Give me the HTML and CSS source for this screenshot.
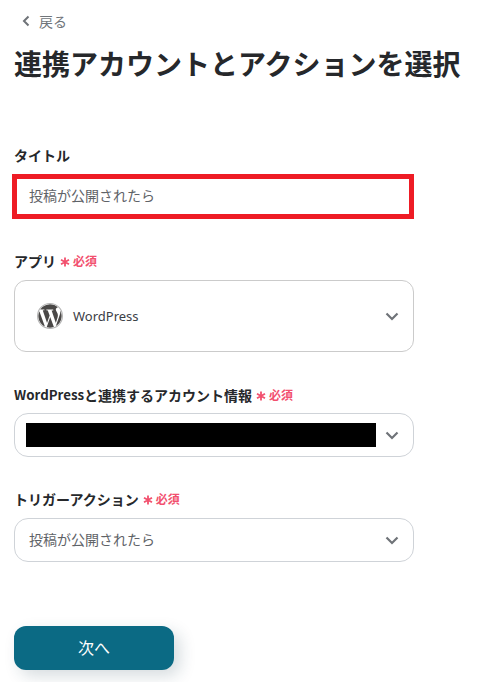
FILE: index.html
```html
<!DOCTYPE html>
<html lang="ja">
<head>
<meta charset="utf-8">
<title>連携アカウントとアクションを選択</title>
<link rel="stylesheet" href="styles.css">
</head>
<body>
<main class="page">
  <a class="back">
    <svg class="back-icon" width="10" height="12" viewBox="0 0 10 12"><path d="M7.5 1.5 3 6l4.5 4.5" fill="none" stroke="#6f7378" stroke-width="2"/></svg>
    <span>戻る</span>
  </a>
  <h1 class="title">連携アカウントとアクションを選択</h1>

  <section class="field field-title">
    <div class="label">タイトル</div>
    <div class="title-input">投稿が公開されたら</div>
  </section>

  <section class="field field-app">
    <div class="label">アプリ<span class="req"><svg class="star" width="10" height="10" viewBox="0 0 10 10"><path d="M5 .5v9M1 2.700l8 4.600M9 2.700l-8 4.600" stroke="#f2506e" stroke-width="1.800" fill="none"/></svg>必須</span></div>
    <div class="select select-app">
      <svg class="wp-logo" width="26" height="26" viewBox="0 0 24 24">
        <circle cx="12" cy="12" r="12" fill="#fff"/>
        <path fill="#4a4847" d="M21.469 6.825c.84 1.537 1.318 3.3 1.318 5.175 0 3.979-2.156 7.456-5.363 9.325l3.295-9.527c.615-1.54.82-2.771.82-3.864 0-.405-.026-.78-.07-1.11m-7.981.105c.647-.03 1.232-.105 1.232-.105.582-.075.514-.93-.067-.899 0 0-1.755.135-2.88.135-1.064 0-2.85-.15-2.85-.15-.585-.03-.661.855-.075.885 0 0 .54.061 1.125.09l1.68 4.605-2.37 7.08L5.354 6.9c.649-.03 1.234-.1 1.234-.1.585-.075.516-.93-.065-.896 0 0-1.746.138-2.874.138-.2 0-.438-.008-.69-.015C4.911 3.15 8.235 1.215 12 1.215c2.809 0 5.365 1.072 7.286 2.833-.046-.003-.091-.009-.141-.009-1.06 0-1.812.923-1.812 1.914 0 .89.513 1.643 1.06 2.531.411.72.89 1.643.89 2.977 0 .915-.354 1.994-.821 3.479l-1.075 3.585-3.9-11.61.001.014zM12 22.784c-1.059 0-2.081-.153-3.048-.437l3.237-9.406 3.315 9.087c.024.053.05.101.078.149-1.12.393-2.325.609-3.582.609M1.211 12c0-1.564.336-3.05.935-4.39L7.29 21.709C3.694 19.96 1.212 16.271 1.211 12"/>
        <circle cx="12" cy="12" r="11.5" fill="none" stroke="#b4b4b4" stroke-width="1"/>
      </svg>
      <span class="app-name">WordPress</span>
      <svg class="chev" width="14" height="9" viewBox="0 0 14 9"><path d="M1.500 1.500 7 7l5.500-5.500" fill="none" stroke="#6f7378" stroke-width="2.200"/></svg>
    </div>
  </section>

  <section class="field field-account">
    <div class="label"><span class="latin">WordPress</span>と連携するアカウント情報<span class="req"><svg class="star" width="10" height="10" viewBox="0 0 10 10"><path d="M5 .5v9M1 2.700l8 4.600M9 2.700l-8 4.600" stroke="#f2506e" stroke-width="1.800" fill="none"/></svg>必須</span></div>
    <div class="select select-small">
      <div class="redacted"></div>
      <svg class="chev" width="14" height="9" viewBox="0 0 14 9"><path d="M1.500 1.500 7 7l5.500-5.500" fill="none" stroke="#6f7378" stroke-width="2.200"/></svg>
    </div>
  </section>

  <section class="field field-trigger">
    <div class="label">トリガーアクション<span class="req"><svg class="star" width="10" height="10" viewBox="0 0 10 10"><path d="M5 .5v9M1 2.700l8 4.600M9 2.700l-8 4.600" stroke="#f2506e" stroke-width="1.800" fill="none"/></svg>必須</span></div>
    <div class="select select-small">
      <span class="value">投稿が公開されたら</span>
      <svg class="chev" width="14" height="9" viewBox="0 0 14 9"><path d="M1.500 1.500 7 7l5.500-5.500" fill="none" stroke="#6f7378" stroke-width="2.200"/></svg>
    </div>
  </section>

  <button class="next" type="button">次へ</button>
</main>
</body>
</html>
```

FILE: styles.css
```css
* { box-sizing: border-box; }
html, body { margin: 0; padding: 0; background: #fff; }
body {
  width: 479px;
  height: 682px;
  overflow: hidden;
  font-family: "Noto Sans CJK JP", "Noto Sans", sans-serif;
  color: #26282b;
}
.page { padding: 12px 14px 0; display: flex; flex-direction: column; align-items: flex-start; }
.back {
  display: flex;
  align-items: center;
  gap: 8px;
  height: 18px;
  margin-left: 7px;
  font-size: 14px;
  line-height: 18px;
  color: #70757a;
}
.title {
  margin: 13px 0 0;
  font-size: 28px;
  line-height: 40px;
  font-weight: 700;
  white-space: nowrap;
  color: #26282b;
}
.field { width: 400px; }
.label {
  display: flex;
  align-items: center;
  height: 20px;
  font-size: 14px;
  line-height: 20px;
  font-weight: 700;
  white-space: nowrap;
  color: #26282b;
}
.latin { font-size: 13.3px; }
.field-title { margin-top: 62px; }
.title-input {
  width: 402px;
  height: 45px;
  margin: 9px 0 0 -2px;
  padding: 0 0 3px 12px;
  border: 5px solid #ee1c25;
  display: flex;
  align-items: center;
  font-size: 14px;
  color: #5f6368;
}
.req {
  display: inline-flex;
  align-items: center;
  margin-left: 4px;
  font-size: 12px;
  font-weight: 700;
  color: #f2506e;
}
.star { flex: none; margin: 2px 3px 0 0; }
.select {
  display: flex;
  align-items: center;
  width: 400px;
  background: #fff;
  border: 1px solid #cfd3d8;
  font-size: 14px;
  color: #5f6368;
}
.chev { margin-left: auto; flex: none; }
.field-app { margin-top: 32px; }
.select-app {
  height: 72px;
  margin-top: 9px;
  padding: 0 14px 0 22px;
  border-radius: 12px;
  border-color: #cbcbcb;
}
.wp-logo { flex: none; }
.app-name { margin-left: 10px; font-size: 13px; color: #3b4046; font-family: "Noto Sans", sans-serif; }
.field-account { margin-top: 33px; }
.select-small {
  height: 44px;
  margin-top: 8px;
  padding: 0 14px;
  border-radius: 14px;
}
.redacted { width: 350px; height: 24px; margin-left: -3px; background: #000; flex: none; }
.value { color: #5f6368; padding-bottom: 2px; }
.field-trigger { margin-top: 32px; }
.field-trigger .select-small { margin-top: 9px; }
.next {
  width: 160px;
  height: 44px;
  margin-top: 64px;
  padding: 0 0 2px;
  border: 0;
  border-radius: 12px;
  background: #0b6a84;
  color: #fff;
  font-family: inherit;
  font-size: 16px;
  box-shadow: 6px 6px 16px rgba(30, 60, 80, 0.18);
}
```
